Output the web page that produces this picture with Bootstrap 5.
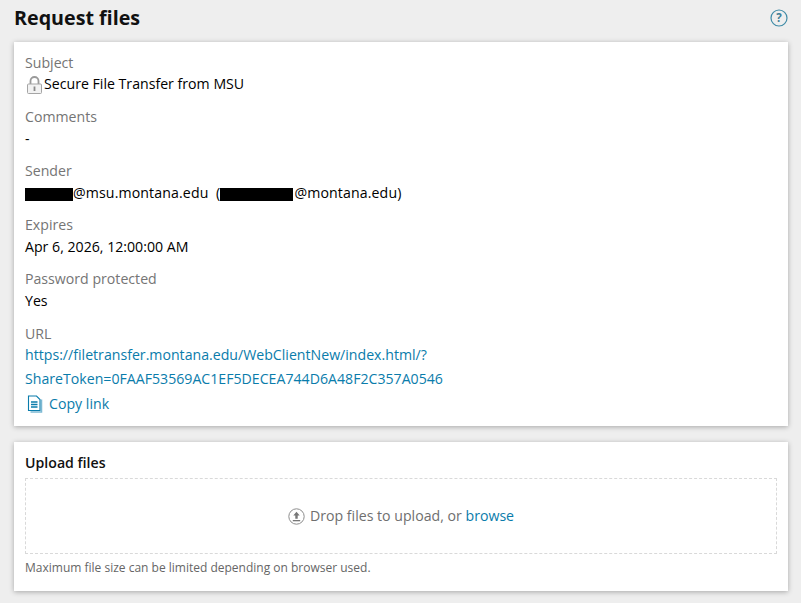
<!DOCTYPE html>
<html lang="en">
<head>
    <meta charset="UTF-8">
    <title>Request files</title>
    <link href="https://cdn.jsdelivr.net/npm/bootstrap@5.3.3/dist/css/bootstrap.min.css" rel="stylesheet">
    <style>
        body {
            background: #eeeeee;
            font-family: "Open Sans", "Liberation Sans", sans-serif;
            font-size: 14.15px;
            line-height: 22px;
            color: #000;
            min-height: 603px;
        }
        a { color: #0a7cab; text-decoration: none; }
        .page-wrap { padding: 0 13px 12px 14px; }
        .page-head { height: 42px; padding-bottom: 6px; }
        .page-title { font-size: 19.7px; font-weight: 700; line-height: 36px; margin: 0; color: #111; }
        .panel { background: #fff; box-shadow: 0 1px 5px rgba(0, 0, 0, .3); padding: 10px 11px; }
        .panel-info { height: 384px; margin-bottom: 16px; }
        .panel-upload { height: 149px; }
        .field { margin-bottom: 10px; }
        .field-label { color: #757575; }
        .sender-line { letter-spacing: .12px; }
        .redact { display: inline-block; background: #000; height: 13px; vertical-align: -3px; }
        .redact-a { width: 48px; }
        .redact-b { width: 73px; margin-right: 1px; }
        .subject-row { height: 22px; }
        .subject-icon { margin: 0 1px 0 1px; }
        .subject-text { margin-bottom: 2px; }
        .url-label { padding-top: 1px; margin-bottom: -1px; }
        .url-links { line-height: 24px; margin-top: -2px; }
        .copy-icon { margin: 0 5px 0 2px; }
        .copy-row { margin-top: 2px; }
        .upload-title { font-weight: 600; color: #111; margin-bottom: 4px; }
        .drop-zone { height: 76px; border: 1px dashed #d9d9d9; color: #6f6f6f; }
        .drop-icon { margin-right: 5px; }
        .limit-note { font-size: 12px; color: #666; margin-top: 3px; }
    </style>
</head>
<body>
<div class="page-wrap">
    <div class="page-head d-flex justify-content-between align-items-center">
        <h1 class="page-title">Request files</h1>
        <svg width="18" height="18" viewBox="0 0 18 18" aria-label="Help">
            <circle cx="9" cy="9" r="8" fill="none" stroke="#3f8ba6" stroke-width="1.2"/>
            <text x="9" y="13" text-anchor="middle" font-family="Open Sans" font-weight="700" font-size="11.5" fill="#3f7f98">?</text>
        </svg>
    </div>

    <div class="panel panel-info">
        <div class="field">
            <div class="field-label">Subject</div>
            <div class="subject-row d-flex align-items-center">
                <svg width="17" height="18" viewBox="0 0 17 18" class="subject-icon flex-shrink-0">
                    <path d="M4.5 8V5a4 4 0 0 1 8 0v3" fill="none" stroke="#9a9a9a" stroke-width="1.8"/>
                    <rect x="1.5" y="8" width="14" height="9.5" rx="1" fill="#f2f2f2" stroke="#a5a5a5"/>
                    <rect x="7.6" y="10.5" width="1.8" height="4.5" fill="#8a8a8a"/>
                </svg>
                <span class="subject-text">Secure File Transfer from MSU</span>
            </div>
        </div>
        <div class="field">
            <div class="field-label">Comments</div>
            <div>-</div>
        </div>
        <div class="field">
            <div class="field-label">Sender</div>
            <div class="sender-line"><span class="redact redact-a"></span>@msu.montana.edu&nbsp; (<span class="redact redact-b"></span>@montana.edu)</div>
        </div>
        <div class="field">
            <div class="field-label">Expires</div>
            <div>Apr 6, 2026, 12:00:00 AM</div>
        </div>
        <div class="field">
            <div class="field-label">Password protected</div>
            <div>Yes</div>
        </div>
        <div class="field-label url-label">URL</div>
        <div class="url-links"><a href="#">https://filetransfer.montana.edu/WebClientNew/index.html/?<br>ShareToken=0FAAF53569AC1EF5DECEA744D6A48F2C357A0546</a></div>
        <div class="copy-row d-flex align-items-center">
            <svg width="17" height="18" viewBox="0 0 17 18" class="copy-icon flex-shrink-0">
                <path d="M3.5 17h11V4.5" fill="none" stroke="#7db9d3" stroke-width="1.5"/>
                <path d="M1.5 1h8l3.5 3.5V15.5H1.5z" fill="#fff" stroke="#0a7cab" stroke-width="1.1"/>
                <path d="M4 7h6.5M4 9.5h6.5M4 12h6.5" stroke="#0a7cab" stroke-width="1.3"/>
            </svg>
            <a href="#">Copy link</a>
        </div>
    </div>

    <div class="panel panel-upload">
        <div class="upload-title">Upload files</div>
        <div class="drop-zone d-flex justify-content-center align-items-center">
            <svg width="17" height="17" viewBox="0 0 17 17" class="drop-icon">
                <circle cx="8.5" cy="8.5" r="7.7" fill="none" stroke="#8c8c8c"/>
                <path d="M8.5 3.8 5.3 7.5h2v3.2h2.4V7.5h2z" fill="#777"/>
                <path d="M4.8 12h7.4v1.3H4.8z" fill="#777"/>
            </svg>
            <span>Drop files to upload, or <a href="#">browse</a></span>
        </div>
        <div class="limit-note">Maximum file size can be limited depending on browser used.</div>
    </div>
</div>
</body>
</html>
